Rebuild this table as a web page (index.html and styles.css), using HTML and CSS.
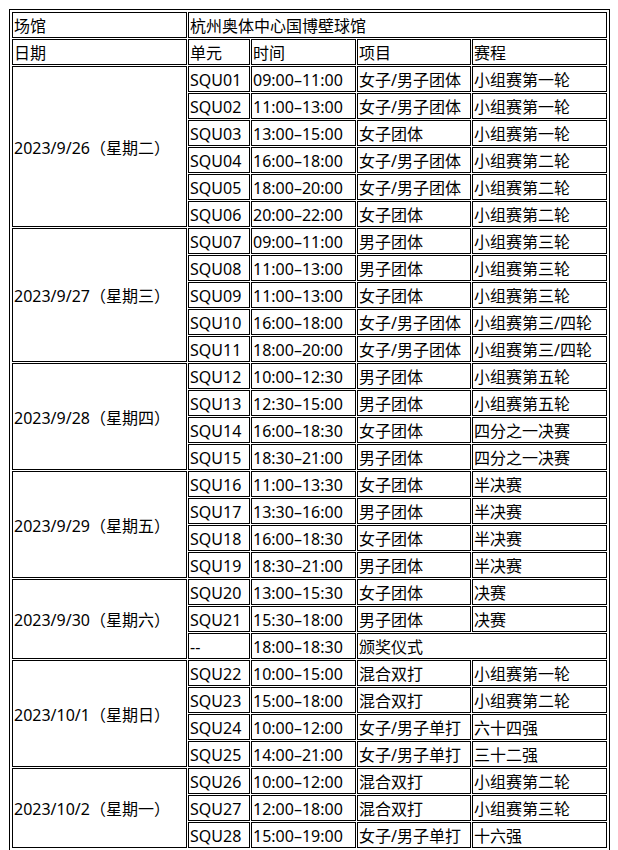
FILE: index.html
```html
<!DOCTYPE html>
<html lang="zh-CN">
<head>
<meta charset="utf-8">
<title>杭州奥体中心国博壁球馆</title>
<link rel="stylesheet" href="styles.css">
</head>
<body>
<table class="schedule">
<colgroup>
<col class="c-date"><col class="c-unit"><col class="c-time"><col class="c-event"><col class="c-stage">
</colgroup>
<tbody>
<tr><td>场馆</td><td colspan="4">杭州奥体中心国博壁球馆</td></tr>
<tr><td>日期</td><td>单元</td><td>时间</td><td>项目</td><td>赛程</td></tr>

<tr><td rowspan="6" class="date">2023/9/26（星期二）</td><td>SQU01</td><td>09:00–11:00</td><td>女子/男子团体</td><td>小组赛第一轮</td></tr>
<tr><td>SQU02</td><td>11:00–13:00</td><td>女子/男子团体</td><td>小组赛第一轮</td></tr>
<tr><td>SQU03</td><td>13:00–15:00</td><td>女子团体</td><td>小组赛第一轮</td></tr>
<tr><td>SQU04</td><td>16:00–18:00</td><td>女子/男子团体</td><td>小组赛第二轮</td></tr>
<tr><td>SQU05</td><td>18:00–20:00</td><td>女子/男子团体</td><td>小组赛第二轮</td></tr>
<tr><td>SQU06</td><td>20:00–22:00</td><td>女子团体</td><td>小组赛第二轮</td></tr>

<tr><td rowspan="5" class="date">2023/9/27（星期三）</td><td>SQU07</td><td>09:00–11:00</td><td>男子团体</td><td>小组赛第三轮</td></tr>
<tr><td>SQU08</td><td>11:00–13:00</td><td>男子团体</td><td>小组赛第三轮</td></tr>
<tr><td>SQU09</td><td>11:00–13:00</td><td>女子团体</td><td>小组赛第三轮</td></tr>
<tr><td>SQU10</td><td>16:00–18:00</td><td>女子/男子团体</td><td>小组赛第三/四轮</td></tr>
<tr><td>SQU11</td><td>18:00–20:00</td><td>女子/男子团体</td><td>小组赛第三/四轮</td></tr>

<tr><td rowspan="4" class="date">2023/9/28（星期四）</td><td>SQU12</td><td>10:00–12:30</td><td>男子团体</td><td>小组赛第五轮</td></tr>
<tr><td>SQU13</td><td>12:30–15:00</td><td>男子团体</td><td>小组赛第五轮</td></tr>
<tr><td>SQU14</td><td>16:00–18:30</td><td>女子团体</td><td>四分之一决赛</td></tr>
<tr><td>SQU15</td><td>18:30–21:00</td><td>男子团体</td><td>四分之一决赛</td></tr>

<tr><td rowspan="4" class="date">2023/9/29（星期五）</td><td>SQU16</td><td>11:00–13:30</td><td>女子团体</td><td>半决赛</td></tr>
<tr><td>SQU17</td><td>13:30–16:00</td><td>男子团体</td><td>半决赛</td></tr>
<tr><td>SQU18</td><td>16:00–18:30</td><td>女子团体</td><td>半决赛</td></tr>
<tr><td>SQU19</td><td>18:30–21:00</td><td>男子团体</td><td>半决赛</td></tr>

<tr><td rowspan="3" class="date">2023/9/30（星期六）</td><td>SQU20</td><td>13:00–15:30</td><td>女子团体</td><td>决赛</td></tr>
<tr><td>SQU21</td><td>15:30–18:00</td><td>男子团体</td><td>决赛</td></tr>
<tr><td>--</td><td>18:00–18:30</td><td colspan="2">颁奖仪式</td></tr>

<tr><td rowspan="4" class="date">2023/10/1（星期日）</td><td>SQU22</td><td>10:00–15:00</td><td>混合双打</td><td>小组赛第一轮</td></tr>
<tr><td>SQU23</td><td>15:00–18:00</td><td>混合双打</td><td>小组赛第二轮</td></tr>
<tr><td>SQU24</td><td>10:00–12:00</td><td>女子/男子单打</td><td>六十四强</td></tr>
<tr><td>SQU25</td><td>14:00–21:00</td><td>女子/男子单打</td><td>三十二强</td></tr>

<tr><td rowspan="3" class="date">2023/10/2（星期一）</td><td>SQU26</td><td>10:00–12:00</td><td>混合双打</td><td>小组赛第二轮</td></tr>
<tr><td>SQU27</td><td>12:00–18:00</td><td>混合双打</td><td>小组赛第三轮</td></tr>
<tr><td>SQU28</td><td>15:00–19:00</td><td>女子/男子单打</td><td>十六强</td></tr>
</tbody>
</table>
</body>
</html>
```

FILE: styles.css
```css
html, body {
  background: #fff;
}
body {
  margin: 9px 0 0 9px;
  color: #000;
  font-family: "Noto Sans", "Noto Sans CJK SC", sans-serif;
  font-size: 16px;
  text-spacing-trim: space-all;
}
.schedule {
  table-layout: fixed;
  width: 601px;
  border: 1px solid #000;
  padding: 1px;
  border-collapse: separate;
  border-spacing: 1px;
}
.c-date { width: 175px; }
.c-unit { width: 62px; }
.c-time { width: 105px; }
.c-event { width: 114px; }
.c-stage { width: 135px; }
.schedule td {
  border: 1px solid #000;
  padding: 2px 1px 0;
  height: 22px;
  line-height: 20px;
  white-space: nowrap;
  overflow: hidden;
  vertical-align: middle;
  text-align: left;
}
.schedule td.date {
  font-family: "Noto Sans", "Noto Sans CJK TC", sans-serif;
}
```
